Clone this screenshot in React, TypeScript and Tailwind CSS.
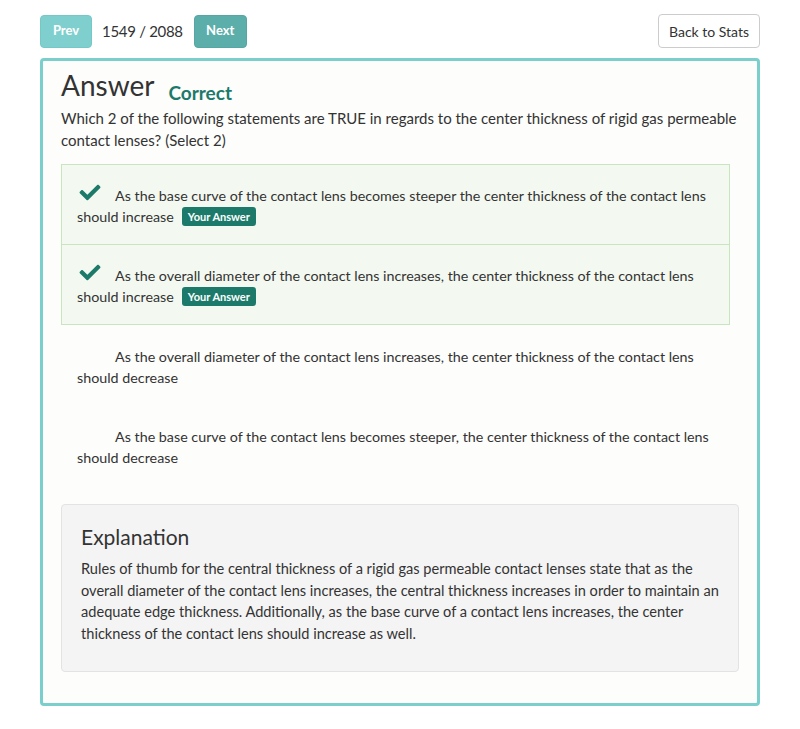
import { FaCheck } from "react-icons/fa";

const options = [
  {
    text: "As the base curve of the contact lens becomes steeper the center thickness of the contact lens should increase",
    chosen: true,
  },
  {
    text: "As the overall diameter of the contact lens increases, the center thickness of the contact lens should increase",
    chosen: true,
  },
  {
    text: "As the overall diameter of the contact lens increases, the center thickness of the contact lens should decrease",
    chosen: false,
  },
  {
    text: "As the base curve of the contact lens becomes steeper, the center thickness of the contact lens should decrease",
    chosen: false,
  },
];

export default function App() {
  return (
    <div
      className="min-h-[729px] bg-white px-10 pt-[14px] text-[#333]"
      style={{ fontFamily: "Lato, 'Open Sans', sans-serif" }}
    >
      {/* top bar */}
      <div className="flex items-center justify-between">
        <div className="flex items-center">
          <button className="h-[33px] w-[52px] rounded-[4px] border border-[#74c9c8] bg-[#7fcfce] text-[13px] font-bold text-white">
            Prev
          </button>
          <span className="ml-[10px] text-[15px] tracking-[-0.3px]">1549 / 2088</span>
          <button className="ml-[11px] h-[33px] w-[53px] rounded-[4px] border border-[#56a7a3] bg-[#5caeaa] text-[13px] font-bold text-white">
            Next
          </button>
        </div>
        <button className="h-[34px] w-[102px] rounded-[4px] border border-[#cccccc] bg-white text-[14px] text-[#333]">
          Back to Stats
        </button>
      </div>

      {/* answer card */}
      <div className="mt-[10px] rounded-[4px] border-[3px] border-[#7acfcd] bg-[#fdfdfb] px-[18px] pb-[31px] pt-[4px]">
        <div className="flex items-end">
          <h1 className="text-[28px] leading-[40px] text-[#333]">Answer</h1>
          <span className="mb-[-3px] ml-[14px] text-[19px] font-bold leading-[30px] text-[#1b7a69]">
            Correct
          </span>
        </div>
        <p className="mt-[3px] text-[15px] leading-[21.5px]">
          Which 2 of the following statements are TRUE in regards to the center thickness of rigid gas permeable
          contact lenses? (Select 2)
        </p>

        <ul className="mr-[9px] mt-[13px]">
          {options.map((o, i) => (
            <li
              key={i}
              className={
                o.chosen
                  ? "-mt-px border border-[#c8e5c0] bg-[#f3f9f1] px-[15px] pb-[17px] pt-[20px] text-[14.3px] leading-[21px] first:mt-0"
                  : "border border-transparent px-[15px] pb-[16px] pt-[20px] text-[14.3px] leading-[21px]"
              }
            >
              {o.chosen ? (
                <FaCheck className="-mt-[3px] ml-[2px] mr-[14px] inline-block h-[21px] w-[22px] align-top text-[#1b7a69]" />
              ) : (
                <span className="inline-block w-[38px]" />
              )}
              {o.text}
              {o.chosen && (
                <span className="ml-[8px] mt-[1px] inline-block h-[19px] rounded-[3px] bg-[#1b7a69] px-[6px] align-top text-[11px] font-bold leading-[19px] text-white">
                  Your Answer
                </span>
              )}
            </li>
          ))}
        </ul>

        <div className="mt-[19px] rounded-[4px] border border-[#e3e3e3] bg-[#f4f4f4] px-[19px] pb-[26px] pt-[17px]">
          <h2 className="text-[21px] leading-[30px]">Explanation</h2>
          <p className="mt-[6px] text-[14.6px] leading-[21.7px]">
            Rules of thumb for the central thickness of a rigid gas permeable contact lenses state that as the overall
            diameter of the contact lens increases, the central thickness increases in order to maintain an adequate
            edge thickness. Additionally, as the base curve of a contact lens increases, the center thickness of the
            contact lens should increase as well.
          </p>
        </div>
      </div>
    </div>
  );
}
